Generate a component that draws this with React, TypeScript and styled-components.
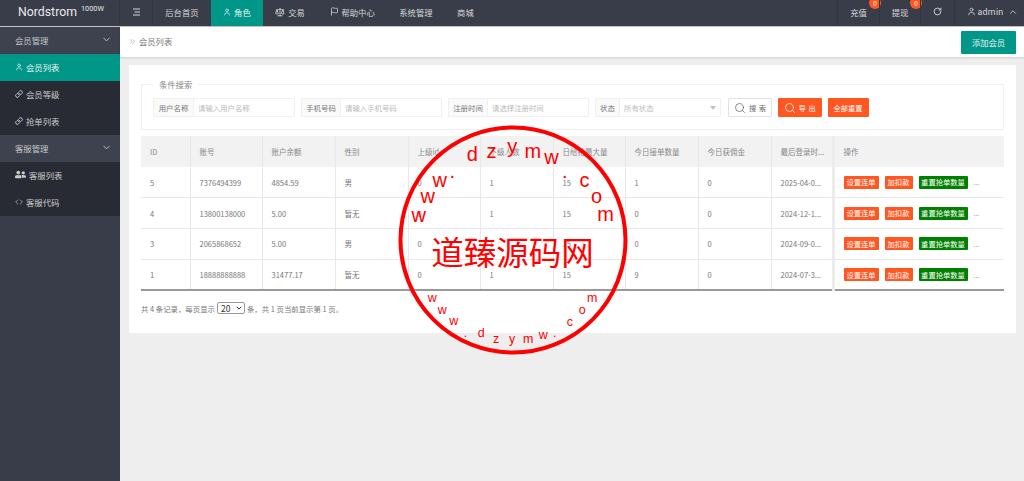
import React from "react";
import styled, { createGlobalStyle } from "styled-components";
import { User, Link as LinkIcon, Scale, Flag, RotateCw, ChevronDown, ChevronUp, Code, Search, ChevronsRight } from "lucide-react";
import { FaUserFriends } from "react-icons/fa";

const Global = createGlobalStyle`
  html, body { margin: 0; padding: 0; height: 481px; overflow: hidden; background: #eee; }
  body, select, button, input { font-family: "Noto Sans CJK SC", "Noto Sans", sans-serif; }
  * { box-sizing: border-box; }
`;

const Page = styled.div`display: flex; flex-direction: column; width: 1024px; height: 481px; position: relative; overflow: hidden;`;
const Header = styled.header`display: flex; height: 27px; background: #393d49; border-bottom: 1px solid #c2c2c2; color: #d6d7da; flex: none;`;
const Logo = styled.div`
  width: 120px; display: flex; align-items: center; padding: 0 0 3px 18px; gap: 4px; color: #e8e9eb;
  font: 12.3px "Roboto", sans-serif; letter-spacing: 0; border-right: 1px solid #343742;
  sup { font-size: 7.3px; position: relative; top: -3px; vertical-align: baseline; letter-spacing: 0; line-height: 1; }
`;
const Burger = styled.div`width: 33px; display: flex; align-items: center; justify-content: center; padding-bottom: 2px; border-right: 1px solid #343742;`;
const Nav = styled.nav`display: flex; flex: 1;`;
const NavItem = styled.div<{ $active?: boolean }>`
  display: flex; align-items: center; gap: 3px; padding: 0 12.3px 3px; font-size: 8.3px;
  background: ${p => (p.$active ? "#009688" : "transparent")};
  color: ${p => (p.$active ? "#e9f5f4" : "#d6d7da")};
`;
const RightNav = styled.div`display: flex;`;
const RightItem = styled.div<{ $w: number; $pad?: number }>`
  position: relative; width: ${p => p.$w}px; display: flex; align-items: center; justify-content: center; gap: 2px;
  padding: 0 0 3px ${p => p.$pad ?? 0}px; font-size: 8.3px; border-left: 1px solid #343742;
`;
const Badge = styled.span`
  position: absolute; top: -3px; right: -2px; width: 12px; height: 12px; border-radius: 50%;
  background: #ff5722; color: #fff; font-size: 6.5px; display: flex; align-items: center; justify-content: center; line-height: 1;
`;
const AdminText = styled.span`font: 8.8px "Roboto", sans-serif; letter-spacing: 0.3px; margin-right: 3px;`;

const Body = styled.div`display: flex; flex: 1; min-height: 0;`;
const Side = styled.aside`width: 120px; flex: none; background: #393d49;`;
const Group = styled.div`
  height: 27px; display: flex; align-items: center; justify-content: space-between; padding: 0 8px 2px 15px;
  font-size: 8.4px; color: #c6c7cb; background: #3e424e;
`;
const SubList = styled.div`background: #282b33;`;
const SubItem = styled.div<{ $active?: boolean }>`
  height: 27px; display: flex; align-items: center; gap: 3px; padding: 0 0 2px 15px; font-size: 8.4px;
  background: ${p => (p.$active ? "#009688" : "transparent")};
  color: ${p => (p.$active ? "#e6f4f3" : "#c9cacd")};
`;

const Main = styled.main`flex: 1; min-width: 0; display: flex; flex-direction: column; background: #eee;`;
const Crumb = styled.div`
  height: 30px; flex: none; background: #fff; display: flex; align-items: center; justify-content: space-between;
  padding: 0 8px 0 8px; box-shadow: 0 1px 2px rgba(0,0,0,.12); font-size: 8.3px; color: #777;
`;
const CrumbLeft = styled.div`display: flex; align-items: center; gap: 2px; padding-bottom: 2px;`;
const AddBtn = styled.button`
  width: 55px; height: 23px; border: 0; background: #009688; color: #e6f4f3; font-size: 8.3px; padding: 0; border-radius: 1px;
`;
const Card = styled.section`
  margin: 8px 8px 0 9px; height: 268px; background: #fff; padding: 12px 12px 0;
`;
const Field = styled.fieldset`
  margin: 3px 0 0; height: 50px; padding: 0 0 0 11px; border: 1px solid #f0f0f0; display: flex; align-items: flex-start;
  legend { margin-left: 0; padding: 0 6px; font-size: 8.3px; color: #888; line-height: 9px; height: 9px; }
`;
const SearchRow = styled.div`display: flex; margin-top: 9px;`;
const InputGroup = styled.div<{ $w: number; $label: number }>`
  display: grid; grid-template-columns: ${p => p.$label}px 1fr; width: ${p => p.$w}px; height: 19px; margin-right: 6px;
  border: 1px solid #f0f0f0; border-radius: 1px; font-size: 7.4px; align-items: center;
`;
const Label = styled.span`background: #fafafa; height: 100%; display: flex; align-items: center; justify-content: center; color: #777; border-right: 1px solid #f0f0f0;`;
const Ph = styled.span`padding-left: 4px; color: #bbb; display: flex; align-items: center; justify-content: space-between; padding-right: 4px;`;
const Caret = styled.i`width: 0; height: 0; border: 3.5px solid transparent; border-top: 4px solid #c2c2c2; border-bottom: 0;`;
const Btn = styled.button<{ $w: number; $plain?: boolean }>`
  width: ${p => p.$w}px; height: 19px; padding: 0; margin-right: 6px; display: flex; align-items: center; justify-content: center; gap: 3px;
  font-size: 7.2px; border-radius: 1px; word-spacing: 1px;
  border: 1px solid ${p => (p.$plain ? "#e2e2e2" : "#ff5722")};
  background: ${p => (p.$plain ? "#fff" : "#ff5722")};
  color: ${p => (p.$plain ? "#666" : "#fff")};
  &:first-of-type { margin-left: 1px; }
`;

const Table = styled.table`
  margin-top: 6px; width: 863px; table-layout: fixed; border-collapse: collapse; font-size: 7.5px; color: #777;
  border-bottom: 2px solid #999; position: relative;
`;
const Th = styled.th<{ $w: number }>`
  width: ${p => p.$w}px; height: 31px; background: #f2f2f2; font-weight: 400; text-align: left; padding: 0 9px; color: #888;
  border-right: 1px solid #e8e8e8; white-space: nowrap; overflow: hidden;
`;
const Td = styled.td`
  height: 30.8px; padding: 0 9px; border-right: 1px solid #e8e8e8; border-bottom: 1px solid #e8e8e8; white-space: nowrap; overflow: hidden;
`;
const OpTh = styled(Th)`border-right: 0; border-left: 3px solid #ececec; padding-left: 9px;`;
const OpTd = styled(Td)`border-right: 0; border-left: 3px solid #ececec; padding-left: 9px;`;
const Ops = styled.div`display: flex; align-items: center; gap: 6px;`;
const Tag = styled.span<{ $green?: boolean; $w: number }>`
  width: ${p => p.$w}px; height: 13px; display: flex; align-items: center; justify-content: center; border-radius: 1px;
  font-size: 7.3px; color: #fff; background: ${p => (p.$green ? "#008000" : "#ff5722")};
`;
const More = styled.span`color: #999; font-size: 7px;`;
const Pager = styled.div`
  display: flex; align-items: center; gap: 2px; margin-top: 11px; font-size: 7.4px; color: #777;
`;
const SelectWrap = styled.span`
  position: relative; display: inline-flex; width: 28px; height: 12px;
  select { appearance: none; width: 100%; height: 100%; font-size: 8.5px; line-height: 1; padding: 0 0 0 3px; border: 1px solid #999; border-radius: 2px; background: #fff; color: #333; }
  svg { position: absolute; right: 2px; top: 2px; color: #333; pointer-events: none; }
`;

const StampSvg = styled.svg`position: absolute; left: 396.5px; top: 124px; width: 232px; height: 232px; pointer-events: none;`;

const topL: [string, number, number][] = [
  ["w", 418.3, 221.7], ["w", 427.3, 203.3], ["w", 439.3, 186.7], [".", 451.7, 178], ["d", 471.7, 161], ["z", 491, 158],
  ["y", 511.7, 153], ["m", 532.3, 158], ["w", 551, 164.3], [".", 564.3, 178], ["c", 584, 187.3], ["o", 596, 203.3], ["m", 605, 221],
];
const botL: [string, number, number][] = [
  ["w", 431.7, 302.3], ["w", 441.7, 314], ["w", 453.3, 325], [".", 465, 337], ["d", 480.7, 337.3], ["z", 495.7, 343.3],
  ["y", 511.7, 343.3], ["m", 527.7, 343.3], ["w", 542.7, 339.3], [".", 554.3, 337], ["c", 569.3, 325.7], ["o", 581.7, 314.3], ["m", 591.7, 302.3],
];

const Stamp = () => (
  <StampSvg viewBox="396.5 124 232 232">
    <circle cx="512.5" cy="240" r="112.5" fill="none" stroke="#f00" strokeWidth="4" />
    {topL.map(([c, x, y], i) => (
      <text key={i} x={x} y={y} fontSize="20" textAnchor="middle" fill="#f00" fontFamily="Liberation Sans, sans-serif">{c}</text>
    ))}
    {botL.map(([c, x, y], i) => (
      <text key={i} x={x} y={y} fontSize="12.5" textAnchor="middle" fill="#f00" fontFamily="Liberation Sans, sans-serif">{c}</text>
    ))}
    <text x="512" y="265" fontSize="32.5" textAnchor="middle" fill="#f00" fontFamily="Noto Sans CJK SC, sans-serif" fontWeight="400">道臻源码网</text>
  </StampSvg>
);

const cols: [string, number][] = [
  ["ID", 49], ["账号", 72], ["账户余额", 73], ["性别", 73], ["上级id", 72], ["下级人数", 73], ["日给抢最大量", 72],
  ["今日接单数量", 73], ["今日获佣金", 73], ["最后登录时...", 62],
];
const rows = [
  ["5", "7376494399", "4854.59", "男", "0", "1", "15", "1", "0", "2025-04-0..."],
  ["4", "13800138000", "5.00", "暂无", "0", "1", "15", "0", "0", "2024-12-1..."],
  ["3", "2065868652", "5.00", "男", "0", "1", "15", "0", "0", "2024-09-0..."],
  ["1", "18888888888", "31477.17", "暂无", "0", "1", "15", "9", "0", "2024-07-3..."],
];

export default function App() {
  return (
    <Page>
      <Global />
      <Header>
        <Logo>Nordstrom <sup>1000W</sup></Logo>
        <Burger>
          <svg width="9" height="8" viewBox="0 0 9 8" fill="none" stroke="#d6d7da" strokeWidth="1"><path d="M1 1h7M2.5 4h5.5M1 7h7" /></svg>
        </Burger>
        <Nav>
          <NavItem>后台首页</NavItem>
          <NavItem $active><User size={8} />角色</NavItem>
          <NavItem><Scale size={10} />交易</NavItem>
          <NavItem><Flag size={9} />帮助中心</NavItem>
          <NavItem>系统管理</NavItem>
          <NavItem>商城</NavItem>
        </Nav>
        <RightNav>
          <RightItem $w={42}>充值<Badge>0</Badge></RightItem>
          <RightItem $w={41}>提现<Badge>0</Badge></RightItem>
          <RightItem $w={34}><RotateCw size={9} strokeWidth={2.4} /></RightItem>
          <RightItem $w={70} $pad={6}><User size={9} /><AdminText>admin</AdminText><ChevronUp size={10} /></RightItem>
        </RightNav>
      </Header>
      <Body>
        <Side>
          <Group>会员管理<ChevronDown size={11} /></Group>
          <SubList>
            <SubItem $active><User size={8} />会员列表</SubItem>
            <SubItem><LinkIcon size={8} strokeWidth={3} />会员等级</SubItem>
            <SubItem><LinkIcon size={8} strokeWidth={3} />抢单列表</SubItem>
          </SubList>
          <Group>客服管理<ChevronDown size={11} /></Group>
          <SubList>
            <SubItem><FaUserFriends size={11} />客服列表</SubItem>
            <SubItem><Code size={8} />客服代码</SubItem>
          </SubList>
        </Side>
        <Main>
          <Crumb>
            <CrumbLeft><ChevronsRight size={9} color="#aaa" />会员列表</CrumbLeft>
            <AddBtn>添加会员</AddBtn>
          </Crumb>
          <Card>
            <Field>
              <legend>条件搜索</legend>
              <SearchRow>
                <InputGroup $w={142} $label={40}><Label>用户名称</Label><Ph>请输入用户名称</Ph></InputGroup>
                <InputGroup $w={141} $label={39}><Label>手机号码</Label><Ph>请输入手机号码</Ph></InputGroup>
                <InputGroup $w={141} $label={39}><Label>注册时间</Label><Ph>请选择注册时间</Ph></InputGroup>
                <InputGroup $w={126} $label={24}><Label>状态</Label><Ph>所有状态<Caret /></Ph></InputGroup>
                <Btn $w={44} $plain><Search size={12} strokeWidth={1.5} />搜 索</Btn>
                <Btn $w={43.5}><Search size={12} strokeWidth={1.5} />导 出</Btn>
                <Btn $w={41}>全部重置</Btn>
              </SearchRow>
            </Field>
            <Table>
              <thead>
                <tr>
                  {cols.map(([c, w]) => <Th key={c} $w={w}>{c}</Th>)}
                  <OpTh $w={171}>操作</OpTh>
                </tr>
              </thead>
              <tbody>
                {rows.map(r => (
                  <tr key={r[0]}>
                    {r.map((v, i) => <Td key={i}>{v}</Td>)}
                    <OpTd>
                      <Ops>
                        <Tag $w={35}>设置连单</Tag>
                        <Tag $w={28}>加扣款</Tag>
                        <Tag $w={49} $green>重置抢单数量</Tag>
                        <More>...</More>
                      </Ops>
                    </OpTd>
                  </tr>
                ))}
              </tbody>
            </Table>
            <Pager>
              共 4 条记录，每页显示
              <SelectWrap>
                <select defaultValue="20"><option>20</option></select>
                <ChevronDown size={8} strokeWidth={3} />
              </SelectWrap>
              条，共 1 页当前显示第 1 页。
            </Pager>
          </Card>
        </Main>
      </Body>
      <Stamp />
    </Page>
  );
}
